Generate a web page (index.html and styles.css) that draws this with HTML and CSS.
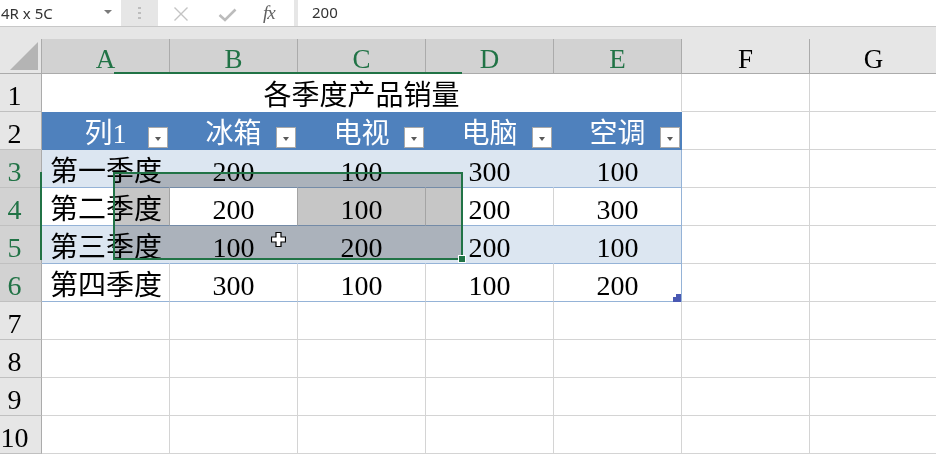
FILE: index.html
```
<!DOCTYPE html>
<html>
<head>
<meta charset="utf-8">
<link rel="stylesheet" href="styles.css">
</head>
<body>
<div class="fbar">
  <div class="namebox"><span>4R x 5C</span><svg class="nb-arrow" width="8" height="4" viewBox="0 0 8 4"><path d="M0 0H8L4 4Z" fill="#7a7a7a"/></svg></div>
  <div class="grip"><i></i><i></i><i></i></div>
  <div class="fbtns">
    <svg class="ic-x" width="16" height="16" viewBox="0 0 16 16"><path d="M1.5 1.5L14.5 14.5M14.5 1.5L1.5 14.5" stroke="#c4c4c4" stroke-width="1.4" fill="none"/></svg>
    <svg class="ic-ok" width="19" height="14" viewBox="0 0 19 14"><path d="M1.5 7L7 12L17.5 1.5" stroke="#bcbcbc" stroke-width="2.6" fill="none"/></svg>
    <span class="fx">fx</span>
  </div>
  <div class="finput">200</div>
</div>
<div class="gap"></div>
<div class="sheet">
  <div class="corner"><svg width="30" height="30" viewBox="0 0 30 30"><path d="M29 1V29H1Z" fill="#b4b4b4"/></svg></div>
  <div class="ch sel">A</div><div class="ch sel">B</div><div class="ch sel">C</div><div class="ch sel">D</div><div class="ch sel">E</div><div class="ch">F</div><div class="ch">G</div>

  <div class="rh">1</div><div class="c title">各季度产品销量</div><div class="c"></div><div class="c"></div>

  <div class="rh">2</div>
  <div class="c th">列1<span class="dd"></span></div>
  <div class="c th">冰箱<span class="dd"></span></div>
  <div class="c th">电视<span class="dd"></span></div>
  <div class="c th">电脑<span class="dd"></span></div>
  <div class="c th">空调<span class="dd"></span></div>
  <div class="c"></div><div class="c"></div>

  <div class="rh sel">3</div>
  <div class="c tb band lft">第一季度</div><div class="c tb band">200</div><div class="c tb band">100</div><div class="c tb band">300</div><div class="c tb band tr">100</div>
  <div class="c"></div><div class="c"></div>

  <div class="rh sel">4</div>
  <div class="c tb lft">第二季度</div><div class="c tb">200</div><div class="c tb">100</div><div class="c tb">200</div><div class="c tb tr">300</div>
  <div class="c"></div><div class="c"></div>

  <div class="rh sel">5</div>
  <div class="c tb band lft">第三季度</div><div class="c tb band">100</div><div class="c tb band">200</div><div class="c tb band">200</div><div class="c tb band tr">100</div>
  <div class="c"></div><div class="c"></div>

  <div class="rh sel">6</div>
  <div class="c tb lft">第四季度</div><div class="c tb">300</div><div class="c tb">100</div><div class="c tb">100</div><div class="c tb tr">200</div>
  <div class="c"></div><div class="c"></div>

  <div class="rh">7</div><div class="c"></div><div class="c"></div><div class="c"></div><div class="c"></div><div class="c"></div><div class="c"></div><div class="c"></div>
  <div class="rh">8</div><div class="c"></div><div class="c"></div><div class="c"></div><div class="c"></div><div class="c"></div><div class="c"></div><div class="c"></div>
  <div class="rh">9</div><div class="c"></div><div class="c"></div><div class="c"></div><div class="c"></div><div class="c"></div><div class="c"></div><div class="c"></div>
  <div class="rh">10</div><div class="c"></div><div class="c"></div><div class="c"></div><div class="c"></div><div class="c"></div><div class="c"></div><div class="c"></div>

  <svg class="resize" width="8" height="8" viewBox="0 0 8 8"><path d="M3 0H8V8H0V3H3Z" fill="#4a59b3"/></svg>
  <div class="drag-fill"><div class="drag-hole"></div></div>
  <div class="drag-box"></div>
  <span class="handle"></span>
  <div class="col-mark"></div>
  <div class="row-mark"></div>
  <svg class="cursor" width="15" height="15" viewBox="0 0 15 15"><path d="M5 0.5H10V5H14.5V10H10V14.5H5V10H0.5V5H5Z" fill="#fff" stroke="#000" stroke-width="1.2"/></svg>
</div>
</body>
</html>
```
FILE: styles.css
```
html, body {
  margin: 0;
  padding: 0;
  width: 936px;
  height: 455px;
  overflow: hidden;
  background: #ffffff;
}

.fbar {
  display: flex;
  height: 26px;
  background: #e6e6e6;
  border-bottom: 1px solid #c8c8c8;
  font-family: "Noto Sans", "Open Sans", sans-serif;
  font-size: 15px;
  color: #333333;
}

.namebox {
  width: 121px;
  box-sizing: border-box;
  background: #ffffff;
  display: flex;
  align-items: center;
  justify-content: space-between;
  padding: 0 9px 1px 1px;
}

.nb-arrow {
  margin-top: -1px;
}

.grip {
  width: 37px;
  display: flex;
  flex-direction: column;
  align-items: center;
  justify-content: center;
  gap: 3px;
}

.grip i {
  display: block;
  width: 3px;
  height: 2px;
  background: #bdbdbd;
}

.fbtns {
  width: 136px;
  background: #ffffff;
  display: flex;
  align-items: center;
  padding-left: 15px;
  box-sizing: border-box;
}

.ic-x {
  margin-top: 1px;
}

.ic-ok {
  margin-left: 29px;
  margin-top: 3px;
}

.fx {
  margin-left: 26px;
  font-family: "Liberation Serif", serif;
  font-style: italic;
  font-size: 19px;
  color: #616161;
  letter-spacing: -1px;
}

.finput {
  flex: 1;
  margin-left: 4px;
  background: #ffffff;
  padding-left: 14px;
  line-height: 24px;
}

.gap {
  height: 12px;
  background: #e6e6e6;
}

.sheet {
  position: relative;
  display: grid;
  grid-template-columns: 42px repeat(7, 128px);
  grid-template-rows: 35px repeat(10, 38px);
  font-family: "Liberation Serif", "Noto Sans CJK SC", serif;
  font-size: 28px;
  color: #000000;
}

.corner {
  background: #e6e6e6;
  border-right: 1px solid #ababab;
  border-bottom: 1px solid #ababab;
  display: flex;
  align-items: flex-end;
  justify-content: flex-end;
  padding: 0 2px 2px 0;
}

.ch {
  background: #e6e6e6;
  border-right: 1px solid #ababab;
  border-bottom: 1px solid #ababab;
  text-align: center;
  font-size: 27px;
  padding-top: 7px;
  line-height: 27px;
}

.ch.sel {
  background: #d2d2d2;
  color: #217346;
}

.rh {
  background: #e6e6e6;
  border-right: 1px solid #ababab;
  border-bottom: 1px solid #c0c0c0;
  text-align: center;
  padding: 7px 12px 0 0;
  line-height: 30px;
}

.rh.sel {
  background: #d2d2d2;
  color: #217346;
}

.corner, .ch, .rh, .c {
  box-sizing: border-box;
  overflow: hidden;
  white-space: nowrap;
}

.c {
  background: #ffffff;
  border-right: 1px solid #d4d4d4;
  border-bottom: 1px solid #d4d4d4;
  text-align: center;
  padding-top: 7px;
  line-height: 30px;
}

.title {
  grid-column: span 5;
  border-bottom-color: #ffffff;
}

.th {
  position: relative;
  background: #4f81bd;
  color: #ffffff;
  border-right-color: #4f81bd;
  border-bottom-color: #4f81bd;
}

.dd {
  position: absolute;
  right: 1px;
  top: 15px;
  width: 20px;
  height: 21px;
  box-sizing: border-box;
  background: #ffffff;
  border: 1px solid #a9a9a9;
}

.dd::after {
  content: "";
  position: absolute;
  left: 6px;
  top: 9px;
  border-left: 3.5px solid transparent;
  border-right: 3.5px solid transparent;
  border-top: 4px solid #595959;
}

.tb {
  border-bottom-color: #95b3d7;
}

.band {
  background: #dce6f1;
  border-right-color: #dce6f1;
}

.tr {
  border-right-color: #95b3d7;
}

.lft {
  text-align: left;
  padding-left: 8px;
}

.resize {
  position: absolute;
  left: 673px;
  top: 255px;
}

.drag-fill {
  position: absolute;
  left: 115px;
  top: 135px;
  width: 346px;
  height: 84px;
  background: #c6c6c6;
  mix-blend-mode: multiply;
}

.drag-hole {
  position: absolute;
  left: 55px;
  top: 14px;
  width: 127px;
  height: 37px;
  background: #ffffff;
}

.drag-box {
  position: absolute;
  left: 113px;
  top: 133px;
  width: 350px;
  height: 88px;
  box-sizing: border-box;
  border: 2px solid #217346;
}

.handle {
  position: absolute;
  left: 459px;
  top: 217px;
  width: 6px;
  height: 6px;
  background: #217346;
  outline: 1px solid #ffffff;
}

.col-mark {
  position: absolute;
  left: 114px;
  top: 33px;
  width: 348px;
  height: 2px;
  background: #217346;
}

.row-mark {
  position: absolute;
  left: 40px;
  top: 133px;
  width: 2px;
  height: 88px;
  background: #217346;
}

.cursor {
  position: absolute;
  left: 271px;
  top: 193px;
}
```
